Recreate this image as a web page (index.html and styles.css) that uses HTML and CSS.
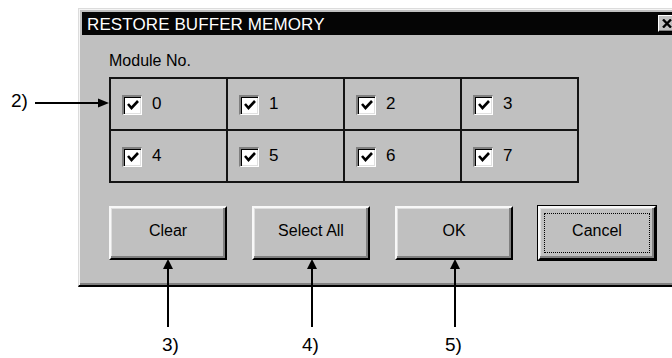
FILE: index.html
```html
<!DOCTYPE html>
<html>
<head>
<meta charset="utf-8">
<title>Restore Buffer Memory</title>
<link rel="stylesheet" href="styles.css">
</head>
<body>
<div class="page">
  <div class="dialog">
    <div class="titlebar">
      <span class="title">RESTORE BUFFER MEMORY</span>
      <span class="close"><svg width="10" height="9" viewBox="0 0 10 9"><path d="M1 0.5 L9 8.5 M9 0.5 L1 8.5" stroke="#000" stroke-width="2.4" fill="none"/></svg></span>
    </div>
    <div class="dlg-body">
      <div class="group-label">Module No.</div>
      <div class="modules">
        <div class="cell"><span class="cb"><svg width="16" height="16" viewBox="0 0 16 16"><path d="M3 7 L6.5 11 L13 4" stroke="#000" stroke-width="2.6" fill="none"/></svg></span><span class="num">0</span></div>
        <div class="cell"><span class="cb"><svg width="16" height="16" viewBox="0 0 16 16"><path d="M3 7 L6.5 11 L13 4" stroke="#000" stroke-width="2.6" fill="none"/></svg></span><span class="num">1</span></div>
        <div class="cell"><span class="cb"><svg width="16" height="16" viewBox="0 0 16 16"><path d="M3 7 L6.5 11 L13 4" stroke="#000" stroke-width="2.6" fill="none"/></svg></span><span class="num">2</span></div>
        <div class="cell"><span class="cb"><svg width="16" height="16" viewBox="0 0 16 16"><path d="M3 7 L6.5 11 L13 4" stroke="#000" stroke-width="2.6" fill="none"/></svg></span><span class="num">3</span></div>
        <div class="cell"><span class="cb"><svg width="16" height="16" viewBox="0 0 16 16"><path d="M3 7 L6.5 11 L13 4" stroke="#000" stroke-width="2.6" fill="none"/></svg></span><span class="num">4</span></div>
        <div class="cell"><span class="cb"><svg width="16" height="16" viewBox="0 0 16 16"><path d="M3 7 L6.5 11 L13 4" stroke="#000" stroke-width="2.6" fill="none"/></svg></span><span class="num">5</span></div>
        <div class="cell"><span class="cb"><svg width="16" height="16" viewBox="0 0 16 16"><path d="M3 7 L6.5 11 L13 4" stroke="#000" stroke-width="2.6" fill="none"/></svg></span><span class="num">6</span></div>
        <div class="cell"><span class="cb"><svg width="16" height="16" viewBox="0 0 16 16"><path d="M3 7 L6.5 11 L13 4" stroke="#000" stroke-width="2.6" fill="none"/></svg></span><span class="num">7</span></div>
      </div>
      <div class="buttons">
        <div class="btn">Clear</div>
        <div class="btn">Select All</div>
        <div class="btn">OK</div>
        <div class="btn default">Cancel</div>
      </div>
    </div>
  </div>

  <svg class="arrows" width="672" height="358" viewBox="0 0 672 358">
    <line x1="35" y1="103" x2="100" y2="103" stroke="#000" stroke-width="2"/>
    <polygon points="98,98.5 109,103 98,107.5" fill="#000"/>
    <line x1="168" y1="267" x2="168" y2="327" stroke="#000" stroke-width="2"/>
    <polygon points="163,269 168,259 173,269" fill="#000"/>
    <line x1="312" y1="267" x2="312" y2="327" stroke="#000" stroke-width="2"/>
    <polygon points="307,269 312,259 317,269" fill="#000"/>
    <line x1="455" y1="267" x2="455" y2="327" stroke="#000" stroke-width="2"/>
    <polygon points="450,269 455,259 460,269" fill="#000"/>
  </svg>
  <span class="callout c2">2)</span>
  <span class="callout c3">3)</span>
  <span class="callout c4">4)</span>
  <span class="callout c5">5)</span>
</div>
</body>
</html>
```

FILE: styles.css
```css
html, body {
  margin: 0;
  padding: 0;
  overflow: hidden;
  background: #fff;
}

body {
  width: 672px;
  height: 358px;
  font-family: "Liberation Sans", Arial, sans-serif;
  color: #000;
}

.page {
  position: relative;
  width: 672px;
  height: 358px;
  padding: 8px 0 0 78px;
  box-sizing: border-box;
}

.dialog {
  width: 604px;
  box-sizing: border-box;
  background: #c0c0c0;
  border-top: 1px solid #dcdcdc;
  border-left: 1px solid #dcdcdc;
  border-bottom: 2px solid #000;
  padding: 3px 3px 0 3px;
  box-shadow: inset 1px 1px 0 #f4f4f4, inset 0 -2px 0 #808080;
}

.titlebar {
  height: 23px;
  background: #050505;
  display: flex;
  align-items: center;
  justify-content: space-between;
  padding: 0 3px 0 5px;
}

.title {
  color: #fff;
  font-size: 17px;
  line-height: 23px;
  padding-top: 1px;
  letter-spacing: 0.1px;
}

.close {
  width: 18px;
  height: 17px;
  box-sizing: border-box;
  background: #c0c0c0;
  border-top: 1px solid #fff;
  border-left: 1px solid #fff;
  border-right: 1px solid #000;
  border-bottom: 1px solid #000;
  box-shadow: inset -1px -1px 0 #808080;
  display: flex;
  align-items: center;
  justify-content: center;
}

.dlg-body {
  padding: 17px 0 25px 27px;
}

.group-label {
  font-size: 16px;
  line-height: 18px;
}

.modules {
  margin-top: 7px;
  width: 470px;
  display: grid;
  grid-template-columns: repeat(4, 115px);
  grid-template-rows: repeat(2, 50px);
  gap: 2px;
  padding: 2px;
  box-sizing: border-box;
  background: #141414;
}

.cell {
  background: #c0c0c0;
  display: flex;
  align-items: center;
  padding-left: 11px;
  gap: 10px;
}

.cb {
  width: 20px;
  height: 20px;
  box-sizing: border-box;
  background: #fff;
  border-top: 2px solid #808080;
  border-left: 2px solid #808080;
  border-right: 1px solid #fff;
  border-bottom: 1px solid #fff;
  box-shadow: inset 1px 1px 0 #000, inset -1px -1px 0 #e0e0e0;
  display: flex;
  align-items: center;
  justify-content: center;
  margin-top: 1px;
}

.num {
  font-size: 17px;
  line-height: 20px;
}

.buttons {
  margin-top: 23px;
  display: flex;
  gap: 25px;
}

.btn {
  position: relative;
  width: 118px;
  height: 54px;
  box-sizing: border-box;
  background: #c0c0c0;
  border-top: 2px solid #f8f8f8;
  border-left: 2px solid #f8f8f8;
  border-right: 2px solid #000;
  border-bottom: 2px solid #000;
  box-shadow: inset -2px -2px 0 #808080, inset 1px 1px 0 #dfdfdf;
  display: flex;
  align-items: center;
  justify-content: center;
  font-size: 16px;
  padding-bottom: 4px;
}

.btn.default {
  outline: 1px solid #000;
}

.btn.default::after {
  content: "";
  position: absolute;
  left: 4px;
  right: 4px;
  top: 5px;
  bottom: 5px;
  border: 1px dotted #000;
}

.arrows {
  position: absolute;
  left: 0;
  top: 0;
  pointer-events: none;
}

.callout {
  position: absolute;
  font-size: 19px;
  line-height: 19px;
  color: #000;
}

.c2 { left: 11px; top: 91px; }
.c3 { left: 162px; top: 335px; }
.c4 { left: 302px; top: 335px; }
.c5 { left: 445px; top: 335px; }
```
